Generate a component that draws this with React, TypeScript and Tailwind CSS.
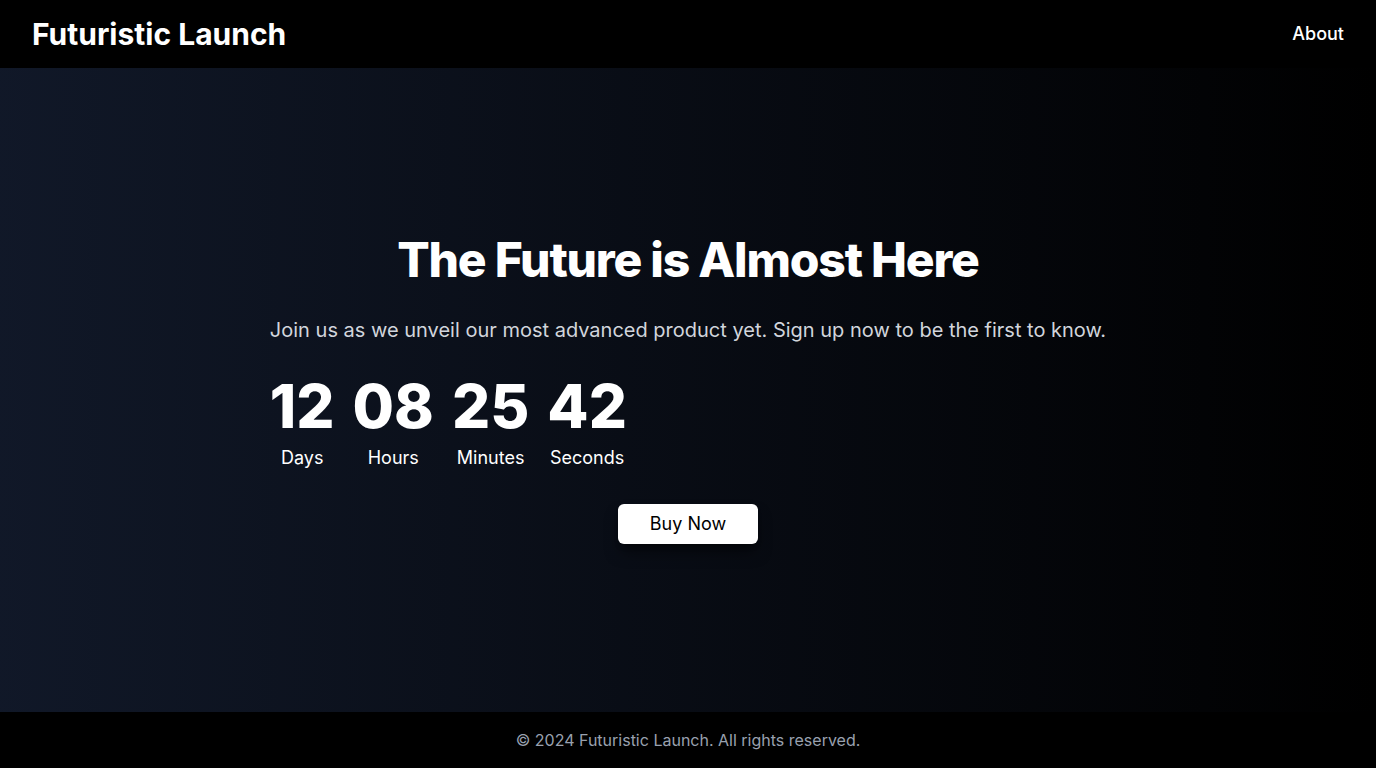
export default function App() {
  const countdown = [
    { value: "12", label: "Days" },
    { value: "08", label: "Hours" },
    { value: "25", label: "Minutes" },
    { value: "42", label: "Seconds" },
  ];

  return (
    <div className="flex min-h-screen flex-col bg-black font-['Inter',sans-serif] text-white">
      <header className="flex items-center justify-between bg-black px-8 py-4">
        <h1 className="text-3xl font-bold">Futuristic Launch</h1>
        <nav>
          <a href="#" className="text-lg font-medium">
            About
          </a>
        </nav>
      </header>

      <main className="flex flex-1 flex-col items-center justify-center bg-linear-to-r/srgb from-gray-900 to-black px-4">
        <div className="flex w-fit flex-col items-center space-y-8">
          <h2 className="text-center text-5xl leading-none font-extrabold tracking-tight">
            The Future is Almost Here
          </h2>
          <p className="text-center text-xl text-gray-300">
            Join us as we unveil our most advanced product yet. Sign up now to be the first to know.
          </p>
          <div className="flex w-full gap-[18px]">
            {countdown.map((item) => (
              <div key={item.label} className="flex flex-col items-center">
                <span className="text-6xl leading-none font-extrabold">{item.value}</span>
                <span className="mt-2 text-lg">{item.label}</span>
              </div>
            ))}
          </div>
          <button className="h-10 rounded-md bg-white px-8 text-lg text-black shadow-lg shadow-black/50">
            Buy Now
          </button>
        </div>
      </main>

      <footer className="bg-black py-4 text-center text-gray-400">
        © 2024 Futuristic Launch. All rights reserved.
      </footer>
    </div>
  );
}
